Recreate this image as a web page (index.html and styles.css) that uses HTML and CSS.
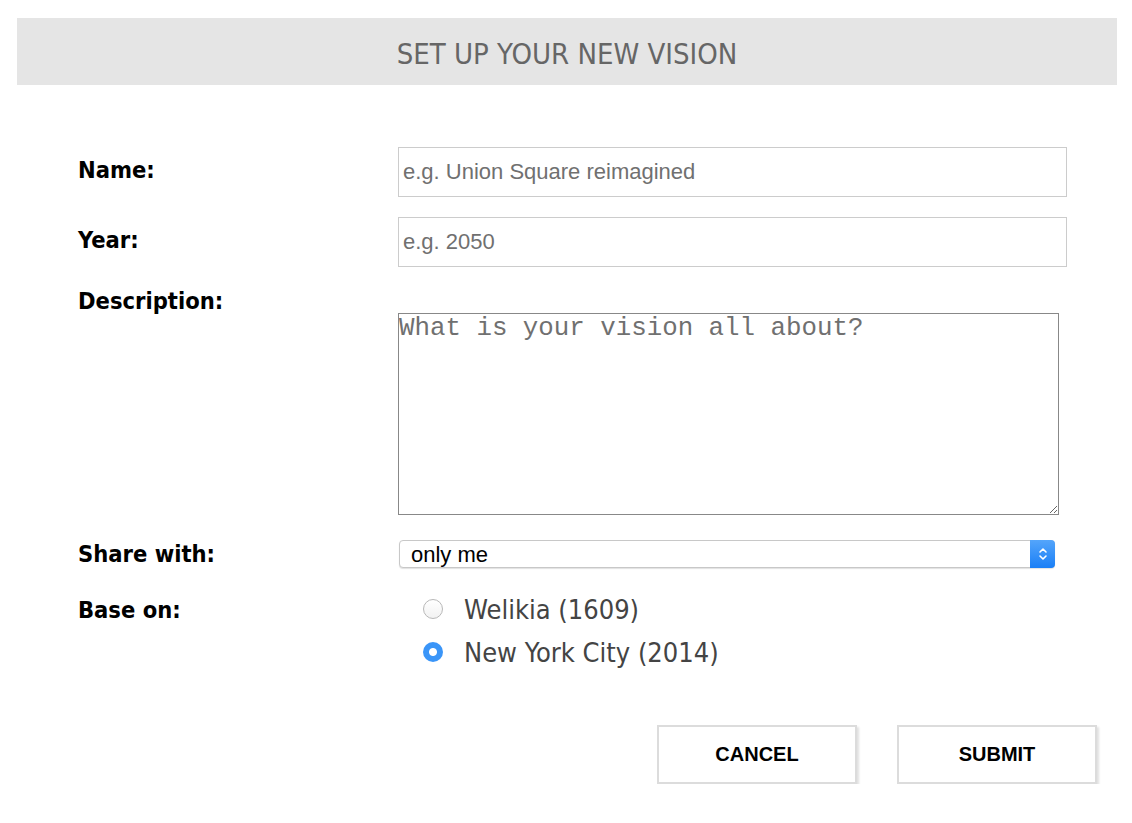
FILE: index.html
```html
<!DOCTYPE html>
<html>
<head>
<meta charset="utf-8">
<link rel="stylesheet" href="styles.css">
</head>
<body>
<div class="page">
  <header class="title-bar"><h1>SET UP YOUR NEW VISION</h1></header>
  <form class="form">
    <div class="row row-name">
      <label class="label">Name:</label>
      <input class="text-input" type="text" placeholder="e.g. Union Square reimagined">
    </div>
    <div class="row row-year">
      <label class="label">Year:</label>
      <input class="text-input" type="text" placeholder="e.g. 2050">
    </div>
    <div class="row row-desc">
      <label class="label">Description:</label>
      <textarea class="textarea" placeholder="What is your vision all about?"></textarea>
    </div>
    <div class="row row-share">
      <label class="label">Share with:</label>
      <div class="select-wrap">
        <select class="select"><option>only me</option></select>
        <span class="select-btn">
          <svg width="10" height="16" viewBox="0 0 10 16"><path d="M2 6 L5 3 L8 6 M2 10 L5 13 L8 10" fill="none" stroke="#fff" stroke-width="1.6" stroke-linecap="round" stroke-linejoin="round"/></svg>
        </span>
      </div>
    </div>
    <div class="row row-base">
      <label class="label">Base on:</label>
      <div class="radios">
        <label class="radio-item"><input class="radio" type="radio" name="base"><span>Welikia (1609)</span></label>
        <label class="radio-item"><input class="radio" type="radio" name="base" checked><span>New York City (2014)</span></label>
      </div>
    </div>
    <div class="actions">
      <button type="button" class="btn">CANCEL</button>
      <button type="button" class="btn">SUBMIT</button>
    </div>
  </form>
</div>
</body>
</html>
```
FILE: styles.css
```css
html, body { margin: 0; padding: 0; background: #fff; }
.page { padding: 18px 15px 0 17px; }
.title-bar {
  box-sizing: border-box;
  background: #e5e5e5;
  height: 67px;
  padding-top: 5px;
  display: flex;
  align-items: center;
  justify-content: center;
}
.title-bar h1 {
  margin: 0;
  font-family: "DejaVu Sans Condensed", "DejaVu Sans", sans-serif;
  font-weight: normal;
  font-size: 29px;
  color: #666;
  letter-spacing: 0;
}
.form { padding: 0 0 0 61px; }
.row {
  display: grid;
  grid-template-columns: 320px 1fr;
  align-items: center;
}
.label {
  font-family: "DejaVu Sans Condensed", "DejaVu Sans", sans-serif;
  font-weight: bold;
  font-size: 23.5px;
  color: #000;
}
.row-name { margin-top: 62px; height: 50px; }
.row-name .label, .row-year .label { margin-top: -4px; }
.row-year { margin-top: 20px; height: 50px; }
.text-input {
  box-sizing: border-box;
  width: 669px;
  height: 50px;
  border: 1px solid #ccc;
  padding: 0 4px;
  font-family: "Liberation Sans", Arial, sans-serif;
  font-size: 22px;
  color: #333;
  outline: none;
}
.text-input::placeholder { color: #707070; }
.row-desc { margin-top: 20px; align-items: start; }
.row-desc .label { margin-top: 0; }
.textarea {
  box-sizing: border-box;
  margin-top: 26px;
  width: 661px;
  height: 202px;
  border: 1px solid #888;
  padding: 2px 0 0 0;
  font-family: "Liberation Mono", "Courier New", monospace;
  font-size: 25.8px;
  line-height: 26px;
  color: #333;
  outline: none;
  resize: both;
}
.textarea::placeholder { color: #707070; }
.row-share { margin-top: 24px; height: 30px; }
.select-wrap {
  position: relative;
  width: 656px;
  height: 28px;
  margin-left: 1px;
}
.select {
  appearance: none;
  -webkit-appearance: none;
  box-sizing: border-box;
  width: 100%;
  height: 28px;
  border: 1px solid #c8c8c8;
  border-radius: 4px;
  background: #fff;
  padding: 0 0 0 11px;
  font-family: "Liberation Sans", Arial, sans-serif;
  font-size: 22px;
  color: #000;
  box-shadow: 0 1px 1px rgba(0,0,0,0.12);
  outline: none;
}
.select-btn {
  position: absolute;
  right: 0;
  top: 0;
  width: 25px;
  height: 28px;
  border-radius: 0 4px 4px 0;
  background: linear-gradient(#54a5fb, #1a7ff6);
  display: flex;
  align-items: center;
  justify-content: center;
}
.row-base { margin-top: 24px; align-items: start; }
.row-base .label { margin-top: 3px; }
.radios { display: flex; flex-direction: column; padding-left: 25px; gap: 11px; }
.radio-item {
  display: flex;
  align-items: center;
  height: 32px;
  font-family: "DejaVu Sans Condensed", "DejaVu Sans", sans-serif;
  font-size: 27px;
  color: #444;
}
.radio {
  appearance: none;
  -webkit-appearance: none;
  box-sizing: border-box;
  width: 20px;
  height: 20px;
  margin: 0 21px 0 0;
  border-radius: 50%;
  border: 1px solid #b8b8b8;
  background: linear-gradient(#fff, #f2f2f2);
}
.radio:checked {
  border: none;
  background: radial-gradient(circle, #fff 0 3.5px, #3a95f8 4.5px);
}
.actions {
  display: flex;
  justify-content: flex-end;
  gap: 40px;
  margin-top: 57px;
  padding-right: 20px;
}
.btn {
  box-sizing: border-box;
  width: 200px;
  height: 59px;
  background: #fff;
  border: 2px solid #dcdcdc;
  box-shadow: 2px 2px 2px rgba(0,0,0,0.12);
  font-family: "Liberation Sans", Arial, sans-serif;
  font-weight: bold;
  font-size: 20px;
  color: #000;
  cursor: pointer;
}
```
